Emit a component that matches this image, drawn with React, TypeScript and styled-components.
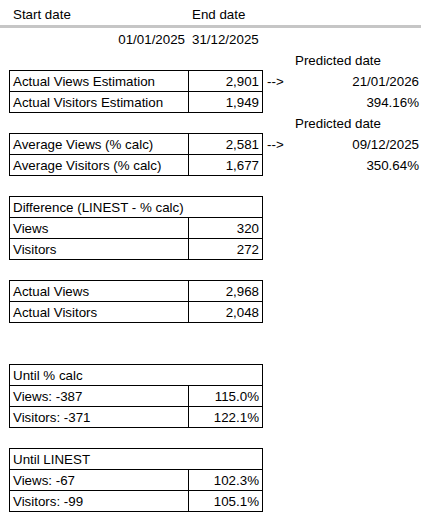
import styled, { createGlobalStyle } from "styled-components";

const COLS = "179px 75px 28px 131px";

const Global = createGlobalStyle`
    body {
        margin: 0;
        background: #fff;
        font-family: "Liberation Sans", Arial, sans-serif;
        font-size: 13.33px;
        color: #000;
    }
`;

type Align = "left" | "right";
type CellDef = {
    text?: string;
    align?: Align;
    box?: boolean;
    span?: number;
    right?: boolean;
    last?: boolean;
};

// each row of the sheet, column A..D
const rows: CellDef[][] = [
    [{ text: "01/01/2025", align: "right" }, { text: "31/12/2025" }],
    [{}, {}, {}, { text: "Predicted date" }],
    [
        { text: "Actual Views Estimation", box: true },
        { text: "2,901", align: "right", box: true, right: true },
        { text: "-->" },
        { text: "21/01/2026", align: "right" },
    ],
    [
        { text: "Actual Visitors Estimation", box: true, last: true },
        { text: "1,949", align: "right", box: true, right: true, last: true },
        {},
        { text: "394.16%", align: "right" },
    ],
    [{}, {}, {}, { text: "Predicted date" }],
    [
        { text: "Average Views (% calc)", box: true },
        { text: "2,581", align: "right", box: true, right: true },
        { text: "-->" },
        { text: "09/12/2025", align: "right" },
    ],
    [
        { text: "Average Visitors (% calc)", box: true, last: true },
        { text: "1,677", align: "right", box: true, right: true, last: true },
        {},
        { text: "350.64%", align: "right" },
    ],
    [],
    [{ text: "Difference (LINEST - % calc)", box: true, span: 2, right: true }],
    [
        { text: "Views", box: true },
        { text: "320", align: "right", box: true, right: true },
    ],
    [
        { text: "Visitors", box: true, last: true },
        { text: "272", align: "right", box: true, right: true, last: true },
    ],
    [],
    [
        { text: "Actual Views", box: true },
        { text: "2,968", align: "right", box: true, right: true },
    ],
    [
        { text: "Actual Visitors", box: true, last: true },
        { text: "2,048", align: "right", box: true, right: true, last: true },
    ],
    [],
    [],
    [{ text: "Until % calc", box: true, span: 2, right: true }],
    [
        { text: "Views: -387", box: true },
        { text: "115.0%", align: "right", box: true, right: true },
    ],
    [
        { text: "Visitors: -371", box: true, last: true },
        { text: "122.1%", align: "right", box: true, right: true, last: true },
    ],
    [],
    [{ text: "Until LINEST", box: true, span: 2, right: true }],
    [
        { text: "Views: -67", box: true },
        { text: "102.3%", align: "right", box: true, right: true },
    ],
    [
        { text: "Visitors: -99", box: true, last: true },
        { text: "105.1%", align: "right", box: true, right: true, last: true },
    ],
    [],
];

function App() {
    return (
        <Sheet>
            <Global />
            <HeaderRow>
                <Cell>Start date</Cell>
                <Cell>End date</Cell>
            </HeaderRow>
            <Freeze />
            {rows.map((row, i) => (
                <Row key={i}>
                    {row.map((c, j) => (
                        <Cell
                            key={j}
                            $align={c.align}
                            $box={c.box}
                            $span={c.span}
                            $right={c.right}
                            $last={c.last}
                        >
                            {c.text}
                        </Cell>
                    ))}
                </Row>
            ))}
        </Sheet>
    );
}

export default App;

const Sheet = styled.div`
    display: flex;
    flex-direction: column;
    width: 422px;
    height: 521px;
    overflow: hidden;
    padding-left: 9px;
    box-sizing: border-box;
`;

const HeaderRow = styled.div`
    display: grid;
    grid-template-columns: ${COLS};
    flex-shrink: 0;
    height: 25px;
    box-sizing: border-box;
    padding-bottom: 1px;
`;

const Freeze = styled.div`
    flex-shrink: 0;
    height: 3px;
    margin-left: -9px;
    margin-right: 1px;
    background: #c6c6c6;
`;

const Row = styled.div`
    display: grid;
    grid-template-columns: ${COLS};
    height: 21px;
    flex-shrink: 0;
`;

const Cell = styled.div<{
    $align?: Align;
    $box?: boolean;
    $span?: number;
    $right?: boolean;
    $last?: boolean;
}>`
    display: flex;
    align-items: flex-end;
    justify-content: ${(p) => (p.$align === "right" ? "flex-end" : "flex-start")};
    grid-column: span ${(p) => p.$span || 1};
    box-sizing: border-box;
    padding: 0 3px 2px;
    line-height: 15px;
    white-space: nowrap;
    border-left: 1px solid ${(p) => (p.$box ? "#000" : "transparent")};
    border-top: 1px solid ${(p) => (p.$box ? "#000" : "transparent")};
    border-right: ${(p) => (p.$right ? "1px solid #000" : "none")};
    box-shadow: ${(p) => (p.$last ? "0 1px 0 #000" : "none")};
`;
